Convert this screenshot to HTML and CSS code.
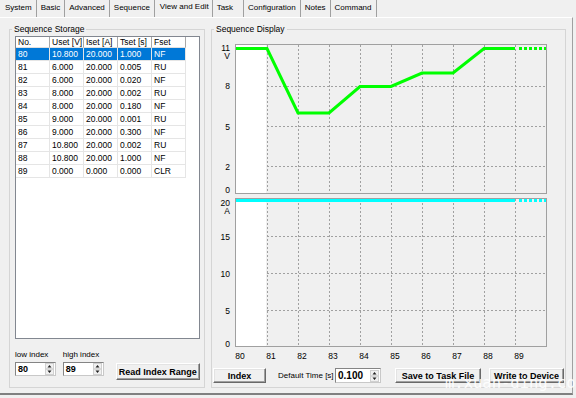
FILE: index.html
```html
<!DOCTYPE html>
<html lang="en">
  <head>
    <meta charset="UTF-8" />
    <title>View and Edit</title>
    <link rel="stylesheet" href="styles.css">
  </head>
  <body>
    <nav class="tabs">
      <span class="tab">System</span>
      <span class="tab">Basic</span>
      <span class="tab">Advanced</span>
      <span class="tab">Sequence</span>
      <span class="tab active">View and Edit</span>
      <span class="tab task">Task</span>
      <span class="tab">Configuration</span>
      <span class="tab">Notes</span>
      <span class="tab">Command</span>
    </nav>
    <main class="panel">
      <fieldset class="group storage">
        <legend>Sequence Storage</legend>
        <div class="listview">
          <table>
            <thead>
              <tr><th>No.</th><th>Uset [V]</th><th>Iset [A]</th><th>Tset [s]</th><th>Fset</th></tr>
            </thead>
            <tbody>
              <tr class="selected"><td>80</td><td>10.800</td><td>20.000</td><td>1.000</td><td>NF</td></tr>
              <tr><td>81</td><td>6.000</td><td>20.000</td><td>0.005</td><td>RU</td></tr>
              <tr><td>82</td><td>6.000</td><td>20.000</td><td>0.020</td><td>NF</td></tr>
              <tr><td>83</td><td>8.000</td><td>20.000</td><td>0.002</td><td>RU</td></tr>
              <tr><td>84</td><td>8.000</td><td>20.000</td><td>0.180</td><td>NF</td></tr>
              <tr><td>85</td><td>9.000</td><td>20.000</td><td>0.001</td><td>RU</td></tr>
              <tr><td>86</td><td>9.000</td><td>20.000</td><td>0.300</td><td>NF</td></tr>
              <tr><td>87</td><td>10.800</td><td>20.000</td><td>0.002</td><td>RU</td></tr>
              <tr><td>88</td><td>10.800</td><td>20.000</td><td>1.000</td><td>NF</td></tr>
              <tr><td>89</td><td>0.000</td><td>0.000</td><td>0.000</td><td>CLR</td></tr>
            </tbody>
          </table>
        </div>
        <div class="range">
          <div class="field">
            <label>low index</label>
            <div class="spin">
              <span>80</span>
              <svg width="9" height="12" viewBox="0 0 9 12"><rect x="0.5" y="0.5" width="8" height="11" fill="#f0f0f0" stroke="#d0d0d0"/><path d="M1 6h7" stroke="#c0c0c0"/><path d="M2.5 4.5h4l-2-2.5z M2.5 7.5h4l-2 2.5z" fill="#222"/></svg>
            </div>
          </div>
          <div class="field">
            <label>high index</label>
            <div class="spin">
              <span>89</span>
              <svg width="9" height="12" viewBox="0 0 9 12"><rect x="0.5" y="0.5" width="8" height="11" fill="#f0f0f0" stroke="#d0d0d0"/><path d="M1 6h7" stroke="#c0c0c0"/><path d="M2.5 4.5h4l-2-2.5z M2.5 7.5h4l-2 2.5z" fill="#222"/></svg>
            </div>
          </div>
          <button class="btn read">Read Index Range</button>
        </div>
      </fieldset>

      <fieldset class="group display">
        <legend>Sequence Display</legend>
        <svg class="chart" width="352" height="325" viewBox="212 37 352 325">
          <!-- voltage -->
          <rect x="236" y="45" width="30" height="148" fill="#fff"/>
          <rect x="235.5" y="44.5" width="311" height="149" fill="none" stroke="#a0a0a0"/>
          <path class="grid" d="M267.5 45V193M298.5 45V193M329.5 45V193M360.5 45V193M391.5 45V193M422.5 45V193M453.5 45V193M484.5 45V193M515.5 45V193M267 86.5H546M267 126.5H546M267 166.5H546"/>
          <polyline class="volt" points="236,48.5 267,48.5 298,113 329,113 360,86.5 391,86.5 422,73 453,73 484,48.5 515,48.5"/>
          <path class="volt dots" d="M519 48.5H546"/>
          <g class="axis">
            <text x="230" y="51">11</text>
            <text x="230" y="59">V</text>
            <text x="230" y="89">8</text>
            <text x="230" y="130">5</text>
            <text x="230" y="170">2</text>
            <text x="230" y="193">0</text>
          </g>
          <!-- current -->
          <rect x="236" y="199" width="30" height="147" fill="#fff"/>
          <rect x="235.5" y="198.5" width="311" height="148" fill="none" stroke="#a0a0a0"/>
          <path class="grid" d="M267.5 199V346M298.5 199V346M329.5 199V346M360.5 199V346M391.5 199V346M422.5 199V346M453.5 199V346M484.5 199V346M515.5 199V346M267 236.5H546M267 273.5H546M267 310.5H546"/>
          <path class="amp" d="M236 200.5H515"/>
          <path class="amp dots" d="M519 200.5H546"/>
          <g class="axis">
            <text x="230" y="206">20</text>
            <text x="230" y="214">A</text>
            <text x="230" y="240">15</text>
            <text x="230" y="277">10</text>
            <text x="230" y="314">5</text>
            <text x="230" y="347">0</text>
          </g>
          <g class="xaxis">
            <text x="240" y="359">80</text>
            <text x="271" y="359">81</text>
            <text x="302" y="359">82</text>
            <text x="333" y="359">83</text>
            <text x="364" y="359">84</text>
            <text x="395" y="359">85</text>
            <text x="426" y="359">86</text>
            <text x="457" y="359">87</text>
            <text x="488" y="359">88</text>
            <text x="519" y="359">89</text>
          </g>
        </svg>
        <div class="actions">
          <button class="btn index">Index</button>
          <label class="small">Default Time [s]</label>
          <div class="spin time">
            <span>0.100</span>
            <svg width="9" height="12" viewBox="0 0 9 12"><rect x="0.5" y="0.5" width="8" height="11" fill="#f0f0f0" stroke="#d0d0d0"/><path d="M1 6h7" stroke="#c0c0c0"/><path d="M2.5 4.5h4l-2-2.5z M2.5 7.5h4l-2 2.5z" fill="#222"/></svg>
          </div>
          <button class="btn save">Save to Task File</button>
          <button class="btn write">Write to Device</button>
        </div>
      </fieldset>
    </main>
    <div class="watermark">m.xuan-ding.com</div>
  </body>
</html>
```

FILE: styles.css
```css
* {
    margin: 0;
    padding: 0;
    box-sizing: border-box;
}
body {
    font-family: "Liberation Sans", Arial, sans-serif;
    font-size: 8.5px;
    color: #000;
    background-color: #f0f0f0;
    width: 576px;
    height: 398px;
    overflow: hidden;
    position: relative;
}

/* Fila de pestañas */
.tabs {
    display: flex;
    height: 17px;
    padding-left: 1px;
    font-size: 8px;
}
.tab {
    line-height: 16px;
    padding: 0 4px;
    border-right: 1px solid #a0a0a0;
    white-space: nowrap;
}
.tab.active {
    line-height: 14px;
    padding: 0 3px 0 5px;
}
.tab.task {
    padding-right: 10px;
}

/* Panel de la pestaña */
.panel {
    display: flex;
    gap: 6px;
    width: 573px;
    padding: 4px 6px 5px 9px;
    border-top: 1px solid #fff;
    border-right: 1px solid #a0a0a0;
    border-bottom: 2px solid #808080;
}
.group {
    flex: none;
    height: 366px;
    border: 1px solid #d5d5d5;
    min-inline-size: 0;
}
.group legend {
    line-height: 14px;
    padding: 0 2px;
}
.storage {
    width: 196px;
    padding: 0 4px 0 5px;
}
.storage legend {
    margin-left: -3px;
}
.display {
    width: 355px;
}
.display legend {
    margin-left: 2px;
}

/* Lista */
.listview {
    height: 303px;
    background-color: #fff;
    border: 1px solid #828790;
}
table {
    width: 170px;
    table-layout: fixed;
    border-collapse: separate;
    border-spacing: 0;
}
th, td {
    text-align: left;
    font-weight: normal;
    padding: 0 0 0 2px;
    white-space: nowrap;
    overflow: hidden;
}
th {
    height: 11px;
    line-height: 10px;
    border-right: 1px solid #a8a8a8;
    border-bottom: 1px solid #e0e0e0;
}
td {
    height: 13px;
    line-height: 12px;
    border-right: 1px solid #e5e5e5;
    border-bottom: 1px solid #e5e5e5;
}
tr.selected td {
    background-color: #0078d7;
    color: #fff;
}

/* Indices */
.range {
    display: flex;
    align-items: flex-start;
    margin-top: 10px;
}
.field {
    display: flex;
    flex-direction: column;
    width: 41px;
}
.field + .field {
    margin-left: 7px;
}
.field label {
    font-size: 8px;
    line-height: 11px;
}
.spin {
    display: flex;
    align-items: center;
    justify-content: space-between;
    height: 14px;
    margin-top: 2px;
    padding: 0 1px 0 2px;
    background-color: #fff;
    border: 1px solid;
    border-color: #848484 #c8c8c8 #c8c8c8 #848484;
    font-weight: bold;
    font-size: 9px;
}
.btn {
    font-family: inherit;
    font-weight: bold;
    font-size: 9px;
    color: #000;
    background-color: #f0f0f0;
    border: 1px solid;
    border-color: #fff #696969 #696969 #fff;
    box-shadow: inset -1px -1px #a0a0a0, inset 1px 1px #e3e3e3;
    padding: 0;
}
.read {
    width: 85px;
    height: 17px;
    margin: 14px 0 0 12px;
}

/* Grafica */
.chart {
    display: block;
    margin-top: 1px;
}
.chart text {
    font-family: "Liberation Sans", Arial, sans-serif;
    font-size: 8.5px;
    fill: #000;
}
.axis text {
    text-anchor: end;
}
.xaxis text {
    text-anchor: middle;
}
.grid {
    fill: none;
    stroke: #a0a0a0;
    stroke-dasharray: 2 2;
}
.volt {
    fill: none;
    stroke: #00ff00;
    stroke-width: 3;
}
.amp {
    fill: none;
    stroke: #00ffff;
    stroke-width: 3;
}
.dots {
    stroke-dasharray: 3 2;
}

/* Botones de abajo */
.actions {
    display: flex;
    align-items: center;
    height: 15px;
    margin-top: 6px;
}
.actions .btn {
    height: 15px;
}
.index {
    width: 53px;
    margin-left: 1px;
}
.small {
    font-size: 8px;
    width: 56px;
    margin-left: 12px;
    white-space: nowrap;
}
.spin.time {
    width: 46px;
    height: 15px;
    margin: 0 0 0 1px;
    font-size: 10px;
}
.save {
    width: 86px;
    margin-left: 14px;
}
.write {
    width: 75px;
    margin-left: 8px;
}

/* Marca de agua encima de todo */
.watermark {
    position: absolute;
    left: 445px;
    top: 376px;
    font-family: "DejaVu Sans Mono", monospace;
    font-size: 15.5px;
    line-height: 1;
    color: #fff;
    opacity: 0.9;
    white-space: nowrap;
}
```
